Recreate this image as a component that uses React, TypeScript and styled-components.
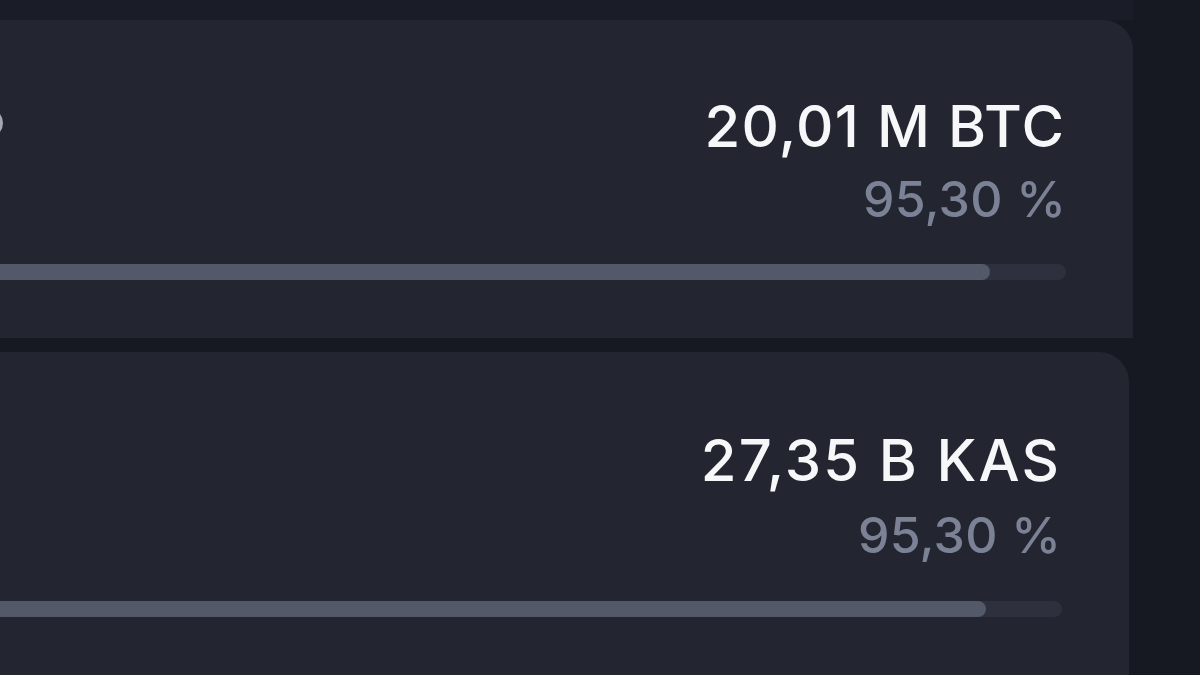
import React from "react";
import styled, { createGlobalStyle } from "styled-components";

const Global = createGlobalStyle`
  html, body {
    margin: 0;
    padding: 0;
    background: #171922;
    overflow: hidden;
  }
  body {
    font-family: Inter, "Noto Sans", "Liberation Sans", sans-serif;
    -webkit-font-smoothing: antialiased;
  }
`;

const Page = styled.div`
  width: 1200px;
  height: 675px;
  overflow: hidden;
  background: #171922;
  display: flex;
  flex-direction: column;
  gap: 14px;
  padding-top: 20px;
  box-sizing: border-box;
  background-image: linear-gradient(#1a1c27, #1a1c27);
  background-size: 1133px 20px;
  background-repeat: no-repeat;
`;

const Card = styled.section<{ $shift: number; $last?: boolean }>`
  flex: ${(p) => (p.$last ? "1 0 auto" : "0 0 auto")};
  margin-left: -590px;
  width: ${(p) => 1723 - p.$shift}px;
  box-sizing: border-box;
  background: #232530;
  border-radius: 0 30px 0 0;
  padding: ${(p) => (p.$last ? "73px" : "71px")} 67px 58px 40px;
  display: flex;
  flex-direction: column;
`;

const TopRow = styled.div`
  display: flex;
  justify-content: space-between;
  align-items: flex-start;
`;

const LeftGroup = styled.div`
  width: 553px;
  height: 40px;
  display: flex;
  align-items: center;
  justify-content: flex-end;
  margin-top: 12px;
`;

const InfoRing = styled.span`
  width: 24px;
  height: 24px;
  border-radius: 50%;
  border: 3px solid #a3a8b6;
  flex: none;
`;

const Values = styled.div<{ $nudge: number; $gap: number }>`
  display: flex;
  flex-direction: column;
  align-items: flex-end;
  gap: ${(p) => p.$gap}px;
  margin-right: ${(p) => p.$nudge}px;
`;

const Amount = styled.div<{ $track: number }>`
  font-size: 58px;
  line-height: 70px;
  font-weight: 500;
  color: #f6f7f9;
  letter-spacing: ${(p) => p.$track}px;
  margin-right: ${(p) => -p.$track}px;
  white-space: nowrap;
`;

const Percent = styled.div`
  font-size: 50px;
  line-height: 60px;
  font-weight: 500;
  color: #7c8296;
  letter-spacing: 0.2px;
  margin-right: -2px;
  white-space: nowrap;
`;

const Track = styled.div<{ $space: number }>`
  margin-top: ${(p) => p.$space}px;
  height: 16px;
  border-radius: 8px;
  background: #2e303e;
  overflow: hidden;
`;

const Fill = styled.div`
  height: 100%;
  border-radius: 8px;
  background: #535969;
`;

type Row = {
  id: string;
  amount: string;
  percent: string;
  fill: number;
  info: boolean;
  shift: number;
  track: number;
  nudge: number;
  gap: number;
  space: number;
};

const rows: Row[] = [
  { id: "btc", amount: "20,01 M BTC", percent: "95,30 %", fill: 95.3, info: true, shift: 0, track: 1.3, nudge: 2, gap: 8, space: 35 },
  { id: "kas", amount: "27,35 B KAS", percent: "95,30 %", fill: 95.3, info: false, shift: 4, track: 2.1, nudge: 3, gap: 10, space: 36 },
];

export default function App() {
  return (
    <>
      <Global />
      <Page>
        {rows.map((r, i) => (
          <Card key={r.id} $shift={r.shift} $last={i === rows.length - 1}>
            <TopRow>
              <LeftGroup>{r.info && <InfoRing />}</LeftGroup>
              <Values $nudge={r.nudge} $gap={r.gap}>
                <Amount $track={r.track}>{r.amount}</Amount>
                <Percent>{r.percent}</Percent>
              </Values>
            </TopRow>
            <Track $space={r.space}>
              <Fill style={{ width: `${r.fill}%` }} />
            </Track>
          </Card>
        ))}
      </Page>
    </>
  );
}
